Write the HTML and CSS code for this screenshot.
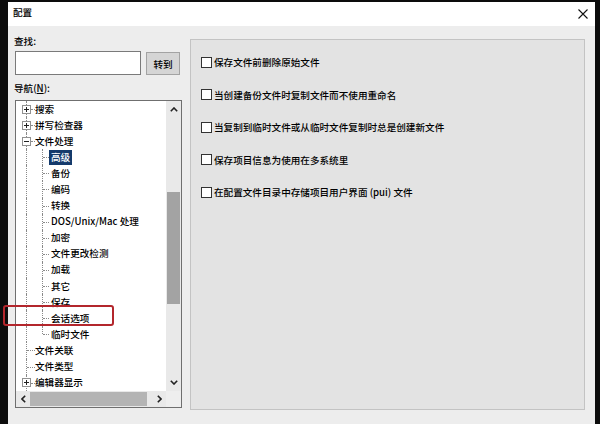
FILE: index.html
```html
<!DOCTYPE html>
<html lang="zh-CN">
<head>
<meta charset="utf-8">
<title>配置</title>
<link rel="stylesheet" href="styles.css">
</head>
<body>
<div class="window">
  <div class="titlebar">
    <span class="title">配置</span>
    <svg class="close" width="10" height="10" viewBox="0 0 10 10"><path d="M0.5 0.5 L9.5 9.5 M9.5 0.5 L0.5 9.5" stroke="#111" stroke-width="1.1" fill="none"/></svg>
  </div>
  <div class="content">
    <div class="left">
      <div class="label lbl-find">查找:</div>
      <div class="find-row">
        <div class="input"></div>
        <div class="btn">转到</div>
      </div>
      <div class="label lbl-nav">导航(<u>N</u>):</div>
      <div class="tree">
        <div class="tree-view">
          <div class="row"><span class="g0"><svg class="exp" width="9" height="9" viewBox="0 0 9 9"><rect x="0.5" y="0.5" width="8" height="8" fill="#fff" stroke="#919191"/><path d="M2 4.5 H7 M4.5 2 V7" stroke="#222"/></svg><i class="dash"></i></span><span class="txt">搜索</span></div>
          <div class="row"><span class="g0"><svg class="exp" width="9" height="9" viewBox="0 0 9 9"><rect x="0.5" y="0.5" width="8" height="8" fill="#fff" stroke="#919191"/><path d="M2 4.5 H7 M4.5 2 V7" stroke="#222"/></svg><i class="dash"></i></span><span class="txt">拼写检查器</span></div>
          <div class="row"><span class="g0"><svg class="exp" width="9" height="9" viewBox="0 0 9 9"><rect x="0.5" y="0.5" width="8" height="8" fill="#fff" stroke="#919191"/><path d="M2 4.5 H7" stroke="#222"/></svg><i class="dash"></i></span><span class="txt">文件处理</span></div>
          <div class="row"><span class="g0 pass"></span><span class="g1"></span><span class="txt sel">高级</span></div>
          <div class="row"><span class="g0 pass"></span><span class="g1"></span><span class="txt">备份</span></div>
          <div class="row"><span class="g0 pass"></span><span class="g1"></span><span class="txt">编码</span></div>
          <div class="row"><span class="g0 pass"></span><span class="g1"></span><span class="txt">转换</span></div>
          <div class="row"><span class="g0 pass"></span><span class="g1"></span><span class="txt">DOS/Unix/Mac 处理</span></div>
          <div class="row"><span class="g0 pass"></span><span class="g1"></span><span class="txt">加密</span></div>
          <div class="row"><span class="g0 pass"></span><span class="g1"></span><span class="txt">文件更改检测</span></div>
          <div class="row"><span class="g0 pass"></span><span class="g1"></span><span class="txt">加载</span></div>
          <div class="row"><span class="g0 pass"></span><span class="g1"></span><span class="txt">其它</span></div>
          <div class="row"><span class="g0 pass"></span><span class="g1"></span><span class="txt">保存</span></div>
          <div class="row"><span class="g0 pass"></span><span class="g1"></span><span class="txt">会话选项</span></div>
          <div class="row"><span class="g0 pass"></span><span class="g1 last"></span><span class="txt">临时文件</span></div>
          <div class="row"><span class="g0 leaf"></span><span class="txt">文件关联</span></div>
          <div class="row"><span class="g0 leaf"></span><span class="txt">文件类型</span></div>
          <div class="row"><span class="g0"><svg class="exp" width="9" height="9" viewBox="0 0 9 9"><rect x="0.5" y="0.5" width="8" height="8" fill="#fff" stroke="#919191"/><path d="M2 4.5 H7 M4.5 2 V7" stroke="#222"/></svg><i class="dash"></i></span><span class="txt">编辑器显示</span></div>
          <div class="row"><span class="g0 pass"></span></div>
        </div>
        <div class="vscroll">
          <div class="sbtn"><svg width="8" height="5" viewBox="0 0 8 5"><path d="M0.8 4.2 L4 1 L7.2 4.2" stroke="#222" stroke-width="1.6" fill="none"/></svg></div>
          <div class="vtrack"><div class="vthumb"></div></div>
          <div class="sbtn"><svg width="8" height="5" viewBox="0 0 8 5"><path d="M0.8 0.8 L4 4 L7.2 0.8" stroke="#222" stroke-width="1.6" fill="none"/></svg></div>
        </div>
        <div class="hscroll">
          <div class="hbtn"><svg width="5" height="8" viewBox="0 0 5 8"><path d="M4.2 0.8 L1 4 L4.2 7.2" stroke="#222" stroke-width="1.6" fill="none"/></svg></div>
          <div class="htrack"><div class="hthumb"></div></div>
          <div class="hbtn"><svg width="5" height="8" viewBox="0 0 5 8"><path d="M0.8 0.8 L4 4 L0.8 7.2" stroke="#222" stroke-width="1.6" fill="none"/></svg></div>
        </div>
        <div class="corner"></div>
      </div>
    </div>
    <div class="panel">
      <div class="opt"><span class="cb"></span><span>保存文件前删除原始文件</span></div>
      <div class="opt"><span class="cb"></span><span>当创建备份文件时复制文件而不使用重命名</span></div>
      <div class="opt"><span class="cb"></span><span>当复制到临时文件或从临时文件复制时总是创建新文件</span></div>
      <div class="opt"><span class="cb"></span><span>保存项目信息为使用在多系统里</span></div>
      <div class="opt"><span class="cb"></span><span>在配置文件目录中存储项目用户界面 (pui) 文件</span></div>
    </div>
  </div>
</div>
<div class="annot"></div>
</body>
</html>
```

FILE: styles.css
```css
* { box-sizing: border-box; }
html, body { margin: 0; padding: 0; }
body {
  width: 600px;
  height: 424px;
  overflow: hidden;
  background: #0c0c0c;
  font-family: "Noto Sans CJK SC", "Microsoft YaHei", sans-serif;
  font-size: 9.6px;
  font-weight: 500;
  color: #000;
  position: relative;
}
.window {
  margin: 2px 0 0 8px;
  width: 587px;
  height: 430px;
  background: #ededed;
}
.titlebar {
  height: 24px;
  background: #fff;
  display: flex;
  justify-content: space-between;
  align-items: flex-start;
  padding: 2px 7px 0 5px;
}
.title { line-height: 16px; }
.close { margin-top: 5px; }
.content {
  display: flex;
  gap: 8px;
  padding: 0 10px 0 7px;
}
.left {
  width: 167px;
  display: flex;
  flex-direction: column;
}
.label { line-height: 16px; margin-left: -1px; }
.lbl-find { margin-top: 7px; }
.lbl-nav { margin-top: 5px; }
.lbl-nav u { text-decoration: underline; }
.find-row {
  display: flex;
  align-items: flex-start;
  margin-top: 2px;
  height: 24px;
}
.input {
  width: 126px;
  height: 24px;
  background: #fff;
  border: 1px solid #7a7a7a;
}
.btn {
  width: 34px;
  height: 23px;
  margin: 1px 0 0 5px;
  background: #d5d5d5;
  border: 1px solid #a3a3a3;
  display: flex;
  align-items: center;
  justify-content: center;
}
.tree {
  margin-top: 4px;
  height: 308px;
  border: 1px solid #6f6f6f;
  background: #fff;
  display: grid;
  grid-template-columns: 1fr 15px;
  grid-template-rows: 290px 16px;
  overflow: hidden;
}
.tree-view { overflow: hidden; }
.row {
  height: 16.1px;
  display: flex;
  align-items: center;
  white-space: nowrap;
}
.g0, .g1 {
  position: relative;
  height: 100%;
  flex: none;
}
.g0 { width: 19px; }
.g1 { width: 14px; }
.g0::before {
  content: "";
  position: absolute;
  left: 10px;
  top: 0;
  bottom: 0;
  border-left: 1px dotted #8a8a8a;
}
.g0 .exp {
  position: absolute;
  left: 6px;
  top: 3.5px;
  z-index: 1;
}
.g0 .dash, .g0.leaf::after {
  position: absolute;
  left: 15px;
  top: 8px;
  width: 4px;
  border-top: 1px dotted #8a8a8a;
}
.g0.leaf::after { content: ""; left: 11px; width: 8px; }
.g1::before {
  content: "";
  position: absolute;
  left: 7px;
  top: 0;
  bottom: 0;
  border-left: 1px dotted #8a8a8a;
}
.g1.last::before { bottom: 50%; }
.g1::after {
  content: "";
  position: absolute;
  left: 8px;
  top: 8px;
  width: 6px;
  border-top: 1px dotted #8a8a8a;
}
.txt {
  padding: 0 2px;
  line-height: 15px;
}
.g0 + .txt { padding-left: 0; }
.txt.sel {
  background: #143a6b;
  color: #fff;
}
.vscroll {
  background: #e9e9e9;
  display: flex;
  flex-direction: column;
}
.sbtn {
  height: 17px;
  display: flex;
  align-items: center;
  justify-content: center;
  flex: none;
}
.vtrack { flex: 1; padding-top: 74px; }
.vthumb { height: 112px; background: #a3a3a3; margin: 0 1px; }
.hscroll {
  background: #e9e9e9;
  display: flex;
}
.hbtn {
  width: 14px;
  display: flex;
  align-items: center;
  justify-content: center;
  flex: none;
}
.htrack { flex: 1; padding: 1px 0 1px 0; }
.hthumb { width: 117px; height: 100%; background: #b4b4b4; }
.corner { background: #eeeeee; }
.panel {
  width: 395px;
  height: 371px;
  margin-top: 13px;
  background: #e3e3e3;
  border: 1px solid #c3c3c3;
  padding: 14px 0 0 10px;
  display: flex;
  flex-direction: column;
  gap: 16.5px;
}
.opt {
  height: 16px;
  display: flex;
  align-items: center;
  gap: 2px;
  white-space: nowrap;
}
.cb {
  width: 11px;
  height: 11px;
  background: #fff;
  border: 1px solid #333;
  flex: none;
}
.annot {
  position: absolute;
  left: 3px;
  top: 305px;
  width: 111px;
  height: 21px;
  border: 2px solid #b3262c;
  border-radius: 3px;
}
```
